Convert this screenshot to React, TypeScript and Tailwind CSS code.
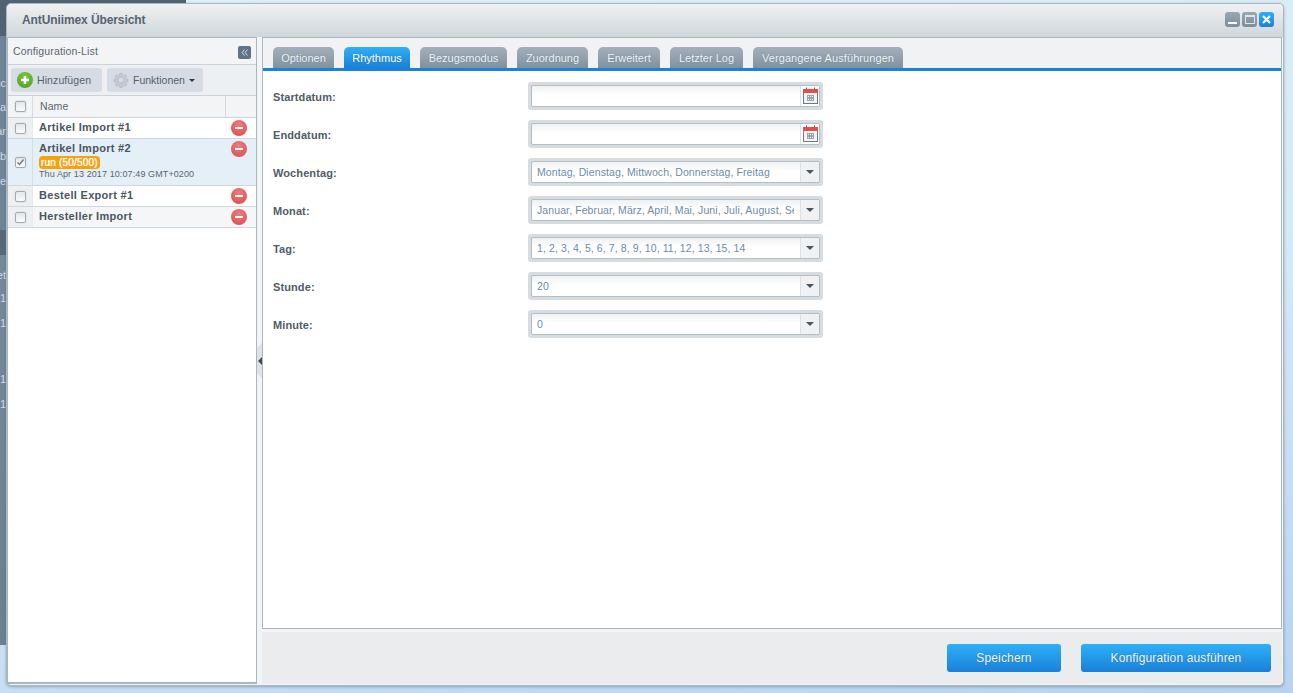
import React from "react";

const F = "font-['Liberation_Sans',Arial,sans-serif]";

function Tab({ label, active, w }: { label: string; active?: boolean; w: string }) {
  return (
    <div
      className={
        "flex h-[21px] items-center justify-center whitespace-nowrap rounded-t-[5px] pt-[1px] text-[11px] [text-shadow:0_0_1px_rgba(60,80,100,0.5)] " +
        w +
        (active
          ? " bg-[linear-gradient(#2eb0f8,#1a80d8)] text-white"
          : " bg-[linear-gradient(#a3b0bb,#80929f)] text-[#f2f6fa]")
      }
    >
      {label}
    </div>
  );
}

function Checkbox({ checked }: { checked?: boolean }) {
  return (
    <div className="flex h-[11px] w-[11px] items-center justify-center rounded-[2px] border border-[#a2aab1] bg-[linear-gradient(#e4e6e8,#fbfbfc)] shadow-[0_0_0_1px_#e6e8ea]">
      {checked && (
        <svg width="9" height="9" viewBox="0 0 9 9">
          <path d="M1.5 4.5 L3.5 6.5 L7.5 1.5" fill="none" stroke="#6d7983" strokeWidth="1.4" />
        </svg>
      )}
    </div>
  );
}

function Minus() {
  return (
    <div className="flex h-4 w-4 items-center justify-center rounded-full bg-[radial-gradient(circle_at_50%_30%,#ee7d7d,#d94a4a)]">
      <div className="h-[2px] w-2 bg-white" />
    </div>
  );
}

function Row({
  title,
  alt,
  selected,
  children,
  h,
}: {
  title: string;
  alt?: boolean;
  selected?: boolean;
  children?: React.ReactNode;
  h: string;
}) {
  return (
    <div
      className={
        "flex border-b border-[#cfd8e0] " +
        h +
        (selected ? " bg-[#e4eff7]" : alt ? " bg-[#f5f6f8]" : " bg-white")
      }
    >
      <div
        className={
          "flex w-[25px] shrink-0 items-center justify-center border-r " +
          (selected ? "border-[#cfdfec]" : "border-[#e8eaec] bg-[#eeeff1]")
        }
      >
        <Checkbox checked={selected} />
      </div>
      <div className="min-w-0 flex-1 pl-[6px] pt-[2px]">
        <div className="text-[11px] leading-[14px] font-bold tracking-[0.3px] text-[#4a5661]">{title}</div>
        {children}
      </div>
      <div className="w-[25px] shrink-0 pt-[2px]">
        <Minus />
      </div>
    </div>
  );
}

function Calendar() {
  return (
    <svg width="15" height="17" viewBox="0 0 15 17" className="mb-[1px]">
      <rect x="0.5" y="2.5" width="14" height="14" fill="#f2f3f4" stroke="#6f7b86" />
      <rect x="0" y="2" width="15" height="4" fill="#e2504a" />
      <rect x="3" y="0.5" width="1" height="2" fill="#c9443f" />
      <rect x="11" y="0.5" width="1" height="2" fill="#c9443f" />
      <g fill="none" stroke="#9aa3ab" strokeWidth="1">
        <rect x="4.5" y="8.5" width="2" height="2" />
        <rect x="6.5" y="8.5" width="2" height="2" />
        <rect x="8.5" y="8.5" width="2" height="2" />
        <rect x="4.5" y="11.5" width="2" height="2" />
        <rect x="6.5" y="11.5" width="2" height="2" />
        <rect x="8.5" y="11.5" width="2" height="2" />
      </g>
    </svg>
  );
}

function Field({ label, value, date }: { label: string; value?: string; date?: boolean }) {
  return (
    <div className="flex h-[38px] items-center">
      <div className="w-[265px] pl-[10px] pt-[2px] text-[11px] font-bold tracking-[0.1px] text-[#515c67]">{label}</div>
      <div className="flex h-[28px] w-[295px] rounded-[3px] bg-[#d7dce1] p-[3px]">
        <div className="flex min-w-0 flex-1 rounded-[2px] border border-[#b5bdc5] bg-[linear-gradient(#eef1f3,#ffffff_9px)]">
          <div className="ml-[5px] mr-[6px] min-w-0 flex-1 overflow-hidden whitespace-nowrap text-[10.5px] leading-[20px] tracking-[0.1px] text-[#6f8ba8]">
            {value}
          </div>
          <div
            className={
              "flex w-[19px] shrink-0 items-center justify-center border-l border-[#dde1e5] " +
              (date ? "bg-white" : "bg-[#eff1f3]")
            }
          >
            {date ? (
              <Calendar />
            ) : (
              <div className="h-0 w-0 border-x-[4px] border-t-[4px] border-x-transparent border-t-[#4b5560]" />
            )}
          </div>
        </div>
      </div>
    </div>
  );
}

function Button({ label, w }: { label: string; w: string }) {
  return (
    <div
      className={
        "flex h-[28px] items-center justify-center rounded-[3px] bg-[linear-gradient(#2eb0f8,#1a80d8)] text-[12px] tracking-[0.15px] text-[#f2f8fd] [text-shadow:0_0_1px_rgba(40,60,90,0.5)] " +
        w
      }
    >
      {label}
    </div>
  );
}

function Strip() {
  const items: [string, string][] = [
    ["mt-[76px]", "nc"],
    ["mt-[9px]", "a"],
    ["mt-[9px]", "ar"],
    ["mt-[10px]", "b"],
    ["mt-[10px]", "e"],
    ["mt-[79px]", "et"],
    ["mt-[8px]", "1"],
    ["mt-[10px]", "1"],
    ["mt-[41px]", "1"],
    ["mt-[10px]", "1"],
  ];
  return (
    <div className="absolute left-0 top-0 h-[645px] w-[186px] overflow-hidden bg-[linear-gradient(#506373_0,#506373_36px,#6f8597_36px,#6f8597_230px,#55697a_230px,#55697a_255px,#75899a_255px,#6b8090)] text-[11px] leading-[15px] text-[#d5dde3]">
      <div className="flex flex-col items-end pr-[180px]">
        {items.map(([m, t], i) => (
          <div key={i} className={m + " whitespace-nowrap"}>
            {t}
          </div>
        ))}
      </div>
    </div>
  );
}

export default function App() {
  return (
    <div
      className={
        F +
        " relative h-[693px] w-[1293px] overflow-hidden bg-[linear-gradient(170deg,#e0f1f8,#d4e8f5_55%,#b9d3ef)]"
      }
    >
      <Strip />
      <div className="relative ml-[6px] flex h-[683px] w-[1278px] translate-y-[3px] flex-col rounded-[5px] border border-[#a9b7c3] bg-[#f3f4f6] shadow-[0_1px_3px_rgba(90,110,130,0.5)]">
        {/* header */}
        <div className="flex h-[33px] shrink-0 items-center justify-between rounded-t-[5px] bg-[linear-gradient(#f0f1f3,#d0d6da)] pl-[15px] pr-[9px]">
          <div className="pb-[1px] text-[12px] font-bold tracking-[-0.1px] text-[#58646f]">AntUniimex Übersicht</div>
          <div className="mb-[2px] flex gap-[2px]">
            <div className="flex h-[15px] w-[15px] items-end justify-center rounded-[3px] bg-[linear-gradient(#97a7b4,#7c8f9d)] pb-[3px]">
              <div className="h-[2px] w-[9px] bg-white" />
            </div>
            <div className="flex h-[15px] w-[15px] items-center justify-center rounded-[3px] bg-[linear-gradient(#97a7b4,#7c8f9d)]">
              <div className="h-[9px] w-[10px] border border-t-2 border-[#dfe5ea]" />
            </div>
            <div className="flex h-[15px] w-[15px] items-center justify-center rounded-[3px] bg-[linear-gradient(#2eb0f8,#1a80d8)]">
              <svg width="9" height="9" viewBox="0 0 9 9">
                <path d="M1 1 L8 8 M8 1 L1 8" stroke="#fff" strokeWidth="2.2" />
              </svg>
            </div>
          </div>
        </div>
        <div className="flex min-h-0 flex-1 pb-[1px]">
          {/* left */}
          <div className="flex w-[250px] shrink-0 flex-col border border-[#a9b7c3] border-b-[2px] border-b-[#aab6c2] bg-white">
            <div className="flex h-[27px] shrink-0 items-center justify-between border-b border-[#c9d3dc] bg-[#f3f4f6] pl-[5px] pr-[5px] pt-[2px] text-[10.5px] tracking-[0.15px] text-[#5a6671]">
              <span>Configuration-List</span>
              <div className="flex h-[13px] w-[13px] items-center justify-center rounded-[2px] bg-[#5f7384]">
                <svg width="9" height="9" viewBox="0 0 9 9">
                  <path d="M4.5 1.5 L2 4.5 L4.5 7.5 M7.5 1.5 L5 4.5 L7.5 7.5" fill="none" stroke="#d5dde3" strokeWidth="1" />
                </svg>
              </div>
            </div>
            <div className="flex h-[30px] shrink-0 items-center gap-[5px] bg-[#eeeff1] pl-[3px]">
              <div className="flex h-[24px] w-[91px] items-center rounded-[3px] bg-[#d5dce3] pl-[6px] text-[10.5px] tracking-[0.1px] text-[#55626e]">
                <div className="mr-[4px] flex h-[16px] w-[16px] items-center justify-center rounded-full bg-[radial-gradient(circle_at_50%_30%,#7cc742,#48a021)]">
                  <svg width="10" height="10" viewBox="0 0 10 10">
                    <path d="M5 1 V9 M1 5 H9" stroke="#fff" strokeWidth="2.4" />
                  </svg>
                </div>
                <span className="pt-[1px]">Hinzufügen</span>
              </div>
              <div className="flex h-[24px] w-[96px] items-center rounded-[3px] bg-[#d5dce3] pl-[6px] text-[10.5px] text-[#55626e]">
                <svg width="16" height="16" viewBox="0 0 24 24" className="mr-[4px]">
                  <path
                    d="M12 2l1.6 0.2 0.7 2.6 1.7 0.7 2.3-1.4 2.3 2.3-1.4 2.3 0.7 1.7 2.6 0.7v3.2l-2.6 0.7-0.7 1.7 1.4 2.3-2.3 2.3-2.3-1.4-1.7 0.7-0.7 2.6h-3.2l-0.7-2.6-1.7-0.7-2.3 1.4-2.3-2.3 1.4-2.3-0.7-1.7-2.6-0.7v-3.2l2.6-0.7 0.7-1.7-1.4-2.3 2.3-2.3 2.3 1.4 1.7-0.7 0.7-2.6z"
                    fill="#c6cbcf"
                    stroke="#aeb4b9"
                    strokeWidth="1"
                  />
                  <circle cx="12" cy="12" r="4.5" fill="#d5dce3" stroke="#aeb4b9" />
                </svg>
                <span className="pt-[1px]">Funktionen</span>
                <div className="ml-[4px] h-0 w-0 border-x-[3px] border-t-[3px] border-x-transparent border-t-[#333]" />
              </div>
            </div>
            <div className="flex h-[23px] shrink-0 items-center border-y border-[#c9d3dc] bg-[#f3f4f6] text-[10.5px] tracking-[0.1px] text-[#5a6671]">
              <div className="flex h-full w-[25px] items-center justify-center border-r border-[#d5dbe0]">
                <Checkbox />
              </div>
              <div className="flex-1 pl-[7px] pt-[1px]">Name</div>
              <div className="h-full w-[31px] border-l border-[#d5dbe0]" />
            </div>
            <Row title="Artikel Import #1" h="h-[21px]" />
            <Row title="Artikel Import #2" h="h-[47px]" selected>
              <div className="mt-[1px] w-fit rounded-[4px] bg-[#f9a109] px-[2px] text-[10px] leading-[13px] tracking-[0.2px] text-white [text-shadow:0_0_1px_#fff]">
                run (50/500)
              </div>
              <div className="text-[9px] leading-[11px] tracking-[0.1px] text-[#5a6671]">
                Thu Apr 13 2017 10:07:49 GMT+0200
              </div>
            </Row>
            <Row title="Bestell Export #1" h="h-[21px]" />
            <Row title="Hersteller Import" h="h-[21px]" alt />
            <div className="flex-1" />
          </div>
          {/* splitter */}
          <div className="flex w-[5px] shrink-0 items-center">
            <div className="flex h-[36px] w-[5px] items-center justify-center bg-[#dfe2e5] [clip-path:polygon(0_15%,100%_0,100%_100%,0_85%)]">
              <div className="h-0 w-0 border-y-[4px] border-r-[4px] border-y-transparent border-r-[#3f4a54]" />
            </div>
          </div>
          {/* right */}
          <div className="flex min-w-0 flex-1 flex-col pr-[1px]">
            <div className="flex min-h-0 flex-1 flex-col border border-[#a9b7c3] bg-white">
              <div className="flex h-[33px] shrink-0 items-end gap-[10px] border-b-[3px] border-[#1b81d9] bg-[#f1f2f4] pl-[10px]">
                <Tab label="Optionen" w="w-[61px]" />
                <Tab label="Rhythmus" w="w-[66px]" active />
                <Tab label="Bezugsmodus" w="w-[87px]" />
                <Tab label="Zuordnung" w="w-[71px]" />
                <Tab label="Erweitert" w="w-[62px]" />
                <Tab label="Letzter Log" w="w-[73px]" />
                <Tab label="Vergangene Ausführungen" w="w-[150px] tracking-[0.08px]" />
              </div>
              <div className="pt-[6px]">
                <Field label="Startdatum:" date />
                <Field label="Enddatum:" date />
                <Field label="Wochentag:" value="Montag, Dienstag, Mittwoch, Donnerstag, Freitag" />
                <Field label="Monat:" value="Januar, Februar, März, April, Mai, Juni, Juli, August, September" />
                <Field label="Tag:" value="1, 2, 3, 4, 5, 6, 7, 8, 9, 10, 11, 12, 13, 15, 14" />
                <Field label="Stunde:" value="20" />
                <Field label="Minute:" value="0" />
              </div>
            </div>
            <div className="mt-[3px] flex h-[52px] shrink-0 items-center justify-end gap-[20px] bg-[#ebecee] pr-[11px]">
              <Button label="Speichern" w="w-[114px]" />
              <Button label="Konfiguration ausführen" w="w-[190px]" />
            </div>
          </div>
        </div>
      </div>
    </div>
  );
}
